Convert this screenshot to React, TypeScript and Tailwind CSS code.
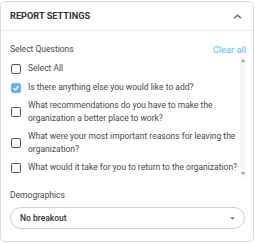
import React from 'react';

const questions = [
  { id: 'q1', label: 'Is there anything else you would like to add?', checked: true },
  { id: 'q2', label: 'What recommendations do you have to make the organization a better place to work?', checked: false },
  { id: 'q3', label: 'What were your most important reasons for leaving the organization?', checked: false },
  { id: 'q4', label: 'What would it take for you to return to the organization?', checked: false },
];

function Box({ checked }: { checked: boolean }) {
  if (checked) {
    return (
      <span className="flex size-[10px] shrink-0 items-center justify-center rounded-[2px] bg-[#5fb6f3]">
        <svg viewBox="0 0 12 12" className="size-[8px]" fill="none" stroke="white" strokeWidth="1.8">
          <path d="M2 6.2 L5 9 L10 3" />
        </svg>
      </span>
    );
  }
  return <span className="size-[10px] shrink-0 rounded-[2px] border-[1.5px] border-[#5a5a5a]" />;
}

function Row({ label, checked }: { label: string; checked: boolean }) {
  return (
    <div className="flex items-center gap-[7px] pl-px">
      <Box checked={checked} />
      <span className="text-[8.5px] leading-[13px] text-[#4a4a4a]">{label}</span>
    </div>
  );
}

export default function App() {
  return (
    <div className="h-[244px] w-[255px] bg-white pt-px font-['Roboto',sans-serif]">
      <div className="flex h-[241px] w-[254px] flex-col rounded-[5px] border border-[#dcdcdc]">
        <div className="flex h-[29px] items-center justify-between border-b border-[#e8e8e8] pl-[9px] pr-[11px]">
          <span className="text-[9.2px] font-bold text-[#333]">REPORT SETTINGS</span>
          <svg viewBox="0 0 10 5" className="h-[5px] w-[9px]" fill="none" stroke="#6b6b6b" strokeWidth="1.5">
            <path d="M1 4.5 L5 1 L9 4.5" />
          </svg>
        </div>
        <div className="flex flex-col pl-[9px] pr-[7px] pt-[11px]">
          <div className="flex h-[14px] items-center justify-between">
            <span className="text-[8.5px] leading-[12px] text-[#4a4a4a]">Select Questions</span>
            <span className="mt-[2px] text-[9.3px] leading-[12px] text-[#4fc3f7]">Clear all</span>
          </div>
          <div className="mt-[1px] flex h-[120px] overflow-hidden">
            <div className="flex flex-1 flex-col gap-[5px] pt-[5px]">
              <div className="mb-[1px]">
                <Row label="Select All" checked={false} />
              </div>
              {questions.map((q) => (
                <Row key={q.id} label={q.label} checked={q.checked} />
              ))}
            </div>
            <div className="flex w-[6px] shrink-0 flex-col items-center justify-between bg-[#f6f6f6] pb-[2px] pt-[2px]">
              <svg viewBox="0 0 4 3" className="h-[3px] w-[4px]"><path d="M0 3 L2 0 L4 3Z" fill="#9a9a9a" /></svg>
              <svg viewBox="0 0 4 3" className="h-[3px] w-[4px]"><path d="M0 0 L2 3 L4 0Z" fill="#9a9a9a" /></svg>
            </div>
          </div>
          <span className="mt-[12px] text-[8.5px] leading-[12px] text-[#4a4a4a]">Demographics</span>
          <div className="mr-px mt-[6px] flex h-[22px] items-center justify-between rounded-full border border-[#cfcfcf] pl-[9px] pr-[9px]">
            <span className="text-[8.5px] font-medium text-[#333]">No breakout</span>
            <svg viewBox="0 0 6 3" className="h-[3px] w-[5px]"><path d="M0 0 L3 3 L6 0Z" fill="#777" /></svg>
          </div>
        </div>
      </div>
    </div>
  );
}
